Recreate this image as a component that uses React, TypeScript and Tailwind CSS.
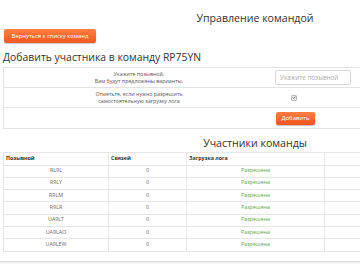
const members = [
  { call: "RL9L", qso: 0 },
  { call: "R9LY", qso: 0 },
  { call: "R9LM", qso: 0 },
  { call: "R9LR", qso: 0 },
  { call: "UA9LT", qso: 0 },
  { call: "UA9LAO", qso: 0 },
  { call: "UA9LEW", qso: 0 },
]

const cols = "grid grid-cols-[105px_78px_138px_60px]"

export default function App() {
  return (
    <div className="relative h-[264px] w-[360px] overflow-hidden bg-white font-['Open_Sans',sans-serif] text-[#333]">
      <div className="ml-[150px] pt-[11px] text-center text-[10.6px] leading-[14px]">Управление командой</div>

      <div className="mt-[4px] flex pl-[4px]">
        <button className="h-[14px] w-[92px] rounded-[2px] bg-gradient-to-b from-[#ff7e42] to-[#f0571c] text-[5.8px] leading-[14px] text-white shadow-[0_1px_1px_rgba(0,0,0,0.2)]">
          Вернуться к списку команд
        </button>
      </div>

      <div className="mt-[7px] pl-[3px] text-[10.4px] leading-[14px]">Добавить участника в команду RP75YN</div>

      <div className="ml-[3px] mt-[3px] w-[380px] border border-[#e3e3e3] text-[5.3px] leading-[7px] text-[#555]">
        <div className="flex h-[20px] items-center border-b border-[#e3e3e3]">
          <div className="w-[270px] text-center">
            Укажите позывной.
            <br />
            Вам будут предложены варианты.
          </div>
          <div className="flex pl-[1px]">
            <div className="flex h-[15px] w-[76px] items-center rounded-[2px] border border-[#d6d6d6] pl-[4px] text-[6.3px] text-[#aaa]">
              Укажите позывной
            </div>
          </div>
        </div>
        <div className="flex h-[20px] items-center border-b border-[#e3e3e3]">
          <div className="w-[270px] text-center">
            Отметьте, если нужно разрешить
            <br />
            самостоятельную загрузку лога
          </div>
          <div className="flex pl-[17px]">
            <span className="flex h-[6px] w-[6px] items-center justify-center rounded-[1px] border border-[#bbb] bg-[#eee]">
              <svg viewBox="0 0 10 10" className="h-[5px] w-[5px]">
                <path d="M2 5.2 L4.2 7.4 L8.2 2.6" fill="none" stroke="#333" strokeWidth="1.8" />
              </svg>
            </span>
          </div>
        </div>
        <div className="flex h-[20px] items-center">
          <div className="w-[270px]" />
          <div className="flex pl-[2px]">
            <button className="h-[13px] w-[39px] rounded-[2px] bg-gradient-to-b from-[#ff7e42] to-[#ef5418] text-[6px] leading-[13px] text-white shadow-[0_1px_1px_rgba(0,0,0,0.25)]">
              Добавить
            </button>
          </div>
        </div>
      </div>

      <div className="ml-[150px] mt-[7px] text-center text-[10.6px] leading-[14px]">Участники команды</div>

      <div className="ml-[3px] mt-[2px] w-[381px] border-l border-t border-[#e6e6e6] text-[5.3px] text-[#666]">
        <div className={`${cols} h-[12.5px] border-b border-[#e6e6e6] font-bold text-[#333]`}>
          <div className="flex items-center border-r border-[#e6e6e6] pl-[2px]">Позывной</div>
          <div className="flex items-center border-r border-[#e6e6e6] pl-[2px]">Связей</div>
          <div className="flex items-center border-r border-[#e6e6e6] pl-[2px]">Загрузка лога</div>
          <div />
        </div>
        {members.map((m) => (
          <div key={m.call} className={`${cols} h-[12.3px] border-b border-[#e6e6e6]`}>
            <div className="flex items-center justify-center border-r border-[#e6e6e6]">{m.call}</div>
            <div className="flex items-center justify-center border-r border-[#e6e6e6]">{m.qso}</div>
            <div className="flex items-center justify-center border-r border-[#e6e6e6] text-[#5aa63f]">Разрешена</div>
            <div />
          </div>
        ))}
      </div>

      <div className="absolute left-0 top-[261px] h-[3px] w-full border-t border-[#d8d8d8] bg-[#f3f3f3]" />
    </div>
  )
}
